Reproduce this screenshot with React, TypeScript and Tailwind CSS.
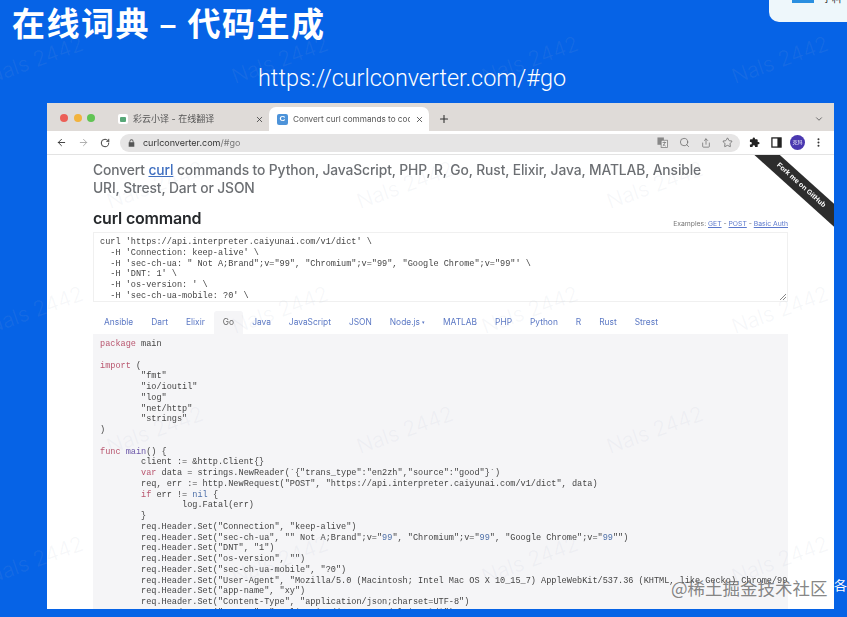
import { ArrowLeft, ArrowRight, ChevronDown, EllipsisVertical, Plus, RotateCw, Search, Share, Star, X } from "lucide-react";
import type { ReactNode } from "react";

const tabs = ["Ansible", "Dart", "Elixir", "Go", "Java", "JavaScript", "JSON", "Node.js", "MATLAB", "PHP", "Python", "R", "Rust", "Strest"];

// watermark rows, centre points on the slide
const marks = [
  [35, 60], [280, 60], [530, 60], [780, 60],
  [155, 185], [405, 185], [655, 185],
  [35, 310], [280, 310], [530, 310], [780, 310],
  [155, 430], [405, 430], [655, 430],
  [35, 560], [280, 560], [530, 560], [780, 560],
];

const curlLines = [
  "curl 'https://api.interpreter.caiyunai.com/v1/dict' \\",
  "  -H 'Connection: keep-alive' \\",
  "  -H 'sec-ch-ua: \" Not A;Brand\";v=\"99\", \"Chromium\";v=\"99\", \"Google Chrome\";v=\"99\"' \\",
  "  -H 'DNT: 1' \\",
  "  -H 'os-version: ' \\",
  "  -H 'sec-ch-ua-mobile: ?0' \\",
  "  -H 'User-Agent: Mozilla/5.0 (Macintosh; Intel Mac OS X 10_15_7) AppleWebKit/537.36 (KHTML, like Gecko) Chrome/99.0' \\",
];

function K({ children }: { children: ReactNode }) {
  return <span className="text-[#b9566f]">{children}</span>;
}

function N({ children }: { children: ReactNode }) {
  return <span className="text-[#4d6fa8]">{children}</span>;
}

function GoCode() {
  return (
    <pre className="font-['Liberation_Mono',monospace] text-[8.55px] leading-[10.75px] text-[#444] [tab-size:8]">
      <K>package</K> main{"\n\n"}
      <K>import</K> ({"\n"}
      {"\t"}"fmt"{"\n"}
      {"\t"}"io/ioutil"{"\n"}
      {"\t"}"log"{"\n"}
      {"\t"}"net/http"{"\n"}
      {"\t"}"strings"{"\n"}
      ){"\n\n"}
      <K>func</K> <span className="text-[#6a55a8]">main</span>() {"{"}{"\n"}
      {"\t"}client := &http.Client{"{}"}{"\n"}
      {"\t"}<K>var</K> data = strings.NewReader(`{'{"trans_type":"en2zh","source":"good"}'}`){"\n"}
      {"\t"}req, err := http.NewRequest("POST", "https://api.interpreter.caiyunai.com/v1/dict", data){"\n"}
      {"\t"}<K>if</K> err != <N>nil</N> {"{"}{"\n"}
      {"\t\t"}log.Fatal(err){"\n"}
      {"\t"}{"}"}{"\n"}
      {"\t"}req.Header.Set("Connection", "keep-alive"){"\n"}
      {"\t"}req.Header.Set("sec-ch-ua", "" Not A;Brand";v="<N>99</N>", "Chromium";v="<N>99</N>", "Google Chrome";v="<N>99</N>""){"\n"}
      {"\t"}req.Header.Set("DNT", "1"){"\n"}
      {"\t"}req.Header.Set("os-version", ""){"\n"}
      {"\t"}req.Header.Set("sec-ch-ua-mobile", "?0"){"\n"}
      {"\t"}req.Header.Set("User-Agent", "Mozilla/5.0 (Macintosh; Intel Mac OS X 10_15_7) AppleWebKit/537.36 (KHTML, like Gecko) Chrome/99.0"){"\n"}
      {"\t"}req.Header.Set("app-name", "xy"){"\n"}
      {"\t"}req.Header.Set("Content-Type", "application/json;charset=UTF-8"){"\n"}
      {"\t"}req.Header.Set("Accept", "application/json, text/plain, */*"){"\n"}
    </pre>
  );
}

function TabBar() {
  return (
    <div className="flex h-[28px] items-end bg-[#dfdbd8] pl-[13px]">
      <div className="flex h-[28px] w-[56px] shrink-0 items-center gap-[5.5px] pt-[1px]">
        <span className="size-[8px] rounded-full bg-[#ec5f57]" />
        <span className="size-[8px] rounded-full bg-[#f2b33d]" />
        <span className="size-[8px] rounded-full bg-[#61c454]" />
      </div>
      <div className="flex h-[24px] w-[153px] shrink-0 items-center pl-[2px] pr-[5px] text-[#555]">
        <span className="flex size-[10px] items-center justify-center rounded-[2px] bg-white">
          <span className="h-[5px] w-[6px] rounded-[1px] bg-[#58a878]" />
        </span>
        <span className="ml-[5px] flex-1 text-[9px]">彩云小译 - 在线翻译</span>
        <X size={9} strokeWidth={2} className="text-[#333]" />
      </div>
      <div className="flex h-[24px] w-[160px] shrink-0 items-center rounded-t-[7px] bg-white pl-[8px] pr-[5px] text-[#555]">
        <span className="flex size-[11px] items-center justify-center rounded-[2px] bg-[#4d93d9] font-['Liberation_Sans',sans-serif] text-[8px] font-bold text-white">C</span>
        <span className="ml-[5px] w-[117px] overflow-hidden whitespace-nowrap text-[8.2px]">Convert curl commands to code</span>
        <X size={9} strokeWidth={2} className="ml-[5px] text-[#333]" />
      </div>
      <div className="ml-[2px] flex h-[24px] w-[26px] items-center justify-center">
        <Plus size={12} strokeWidth={2.2} className="text-[#333]" />
      </div>
      <div className="ml-auto flex h-[24px] w-[30px] items-center justify-center">
        <ChevronDown size={10} strokeWidth={2} className="text-[#555]" />
      </div>
    </div>
  );
}

function Toolbar() {
  return (
    <div className="flex h-[24px] items-center border-b border-[#e3e3e3] bg-white pl-[9px] pr-[10px]">
      <ArrowLeft size={11} strokeWidth={2} className="text-[#333]" />
      <ArrowRight size={11} strokeWidth={2} className="ml-[11px] text-[#aaa]" />
      <RotateCw size={10} strokeWidth={2.2} className="ml-[11px] text-[#333]" />
      <div className="ml-[10px] flex h-[18px] w-[621px] items-center rounded-full bg-[#e6e5e5] pl-[8px] pr-[7px]">
        <svg viewBox="0 0 10 12" className="h-[8px] w-[7px] fill-[#555]">
          <path d="M2 5V3.5a3 3 0 0 1 6 0V5h1.2v6.5H.8V5zm1.2 0h3.6V3.5a1.8 1.8 0 0 0-3.6 0z" />
        </svg>
        <span className="ml-[8px] text-[9px] text-[#333]">
          curlconverter.com<span className="text-[#777]">/#go</span>
        </span>
        <div className="ml-auto flex items-center gap-[11px] text-[#666]">
          <svg viewBox="0 0 12 12" className="size-[11px]">
            <rect x="0.5" y="0.5" width="7" height="8" fill="#888" />
            <rect x="4.5" y="3.5" width="7" height="8" fill="#eee" stroke="#777" strokeWidth="0.8" />
            <path d="M6 6h4M8 5v1M6.5 10l2.5-4M7 8l2.5 2" stroke="#666" strokeWidth="0.7" fill="none" />
          </svg>
          <Search size={11} strokeWidth={1.6} />
          <Share size={10} strokeWidth={1.7} />
          <Star size={11} strokeWidth={1.7} />
        </div>
      </div>
      <svg viewBox="0 0 24 24" className="ml-[9px] size-[11px] fill-[#222]">
        <path d="M20.5 11H19V7a2 2 0 0 0-2-2h-4V3.5a2.5 2.5 0 0 0-5 0V5H4a2 2 0 0 0-2 2v3.8h1.5a2.7 2.7 0 0 1 0 5.4H2V20a2 2 0 0 0 2 2h3.8v-1.5a2.7 2.7 0 0 1 5.4 0V22H17a2 2 0 0 0 2-2v-4h1.5a2.5 2.5 0 0 0 0-5z" />
      </svg>
      <svg viewBox="0 0 12 12" className="ml-[11px] size-[11px]">
        <rect x="1" y="1" width="10" height="10" fill="none" stroke="#222" strokeWidth="1.4" />
        <rect x="7" y="1" width="4" height="10" fill="#222" />
      </svg>
      <span className="ml-[8px] flex size-[15px] items-center justify-center rounded-full bg-[#4a38b0] text-[5px] text-white">克玛</span>
      <EllipsisVertical size={11} strokeWidth={2.4} className="ml-[8px] text-[#333]" />
    </div>
  );
}

function PageContent() {
  return (
    <div className="relative min-h-0 flex-1 overflow-hidden bg-white pl-[46px] pr-[46px] font-['Inter',sans-serif]">
      <h1 className="pt-[6px] text-[13.8px] font-medium leading-[18px] tracking-[-0.1px] text-[#6c6f73]">
        Convert <a className="text-[#3f6fc0] underline">curl</a> commands to Python, JavaScript, PHP, R, Go, Rust, Elixir, Java, MATLAB, Ansible
        <br />
        URI, Strest, Dart or JSON
      </h1>
      <div className="mt-[9px] flex h-[24px] items-end justify-between">
        <h2 className="text-[16px] font-semibold leading-[24px] tracking-[-0.2px] text-[#26292c]">curl command</h2>
        <p className="pb-[1px] text-[6.8px] leading-[10px] text-[#777]">
          Examples: <a className="text-[#5b78cc] underline">GET</a> - <a className="text-[#5b78cc] underline">POST</a> - <a className="text-[#5b78cc] underline">Basic Auth</a>
        </p>
      </div>
      <div className="relative mt-[2px] h-[70px] overflow-hidden border border-[#f0f0f0] pl-[6px] pt-[4px]">
        <pre className="font-['Liberation_Mono',monospace] text-[8.55px] leading-[10.75px] text-[#444]">{curlLines.join("\n")}</pre>
        <svg viewBox="0 0 8 8" className="absolute bottom-0 right-0 size-[8px] stroke-[#888]">
          <path d="M1 7 7 1M4 7l3-3" />
        </svg>
      </div>
      <div className="mt-[9px] flex h-[23px] items-stretch pl-[2px]">
        {tabs.map((t) => (
          <span
            key={t}
            className={
              t === "Go"
                ? "flex items-center rounded-t-[3px] bg-[#f5f5f7] px-[9px] text-[8.4px] text-[#666]"
                : "flex items-center px-[9px] text-[8.4px] text-[#5b78c4]"
            }
          >
            {t}
            {t === "Node.js" && <span className="ml-[2px] text-[5px]">▾</span>}
          </span>
        ))}
      </div>
      <div className="h-[300px] overflow-hidden bg-[#f5f5f7] pl-[7px] pt-[5px]">
        <GoCode />
      </div>
      {/* ribbon over the page corner */}
      <div className="absolute right-[-32px] top-[22px] flex h-[17px] w-[130px] rotate-[42deg] items-center justify-center bg-[#2d2d2d] font-['Liberation_Sans',sans-serif] text-[7px] font-bold text-white">
        Fork me on GitHub
      </div>
    </div>
  );
}

export default function App() {
  return (
    <div className="relative flex h-[617px] w-[847px] flex-col overflow-hidden bg-[#0663e6]">
      <div className="relative h-[103px] shrink-0 text-white">
        <h1 className="pl-[12px] font-['Noto_Sans_CJK_SC',sans-serif] text-[33px] font-bold leading-[44px] tracking-[1.5px]">在线词典 – 代码生成</h1>
        <p className="pl-[258px] pt-[19px] font-['Roboto',sans-serif] text-[23.4px] font-light leading-[30px]">https://curlconverter.com/#go</p>
      </div>
      <div className="ml-[47px] flex h-[506px] w-[787px] shrink-0 flex-col overflow-hidden font-['Inter','Noto_Sans_CJK_SC',sans-serif] blur-[0.4px]">
        <TabBar />
        <Toolbar />
        <PageContent />
      </div>
      {/* card peeking in at the top right */}
      <div className="absolute right-[-20px] top-[-10px] flex h-[32px] w-[98px] items-start rounded-[10px] bg-[#eef7fb] pl-[23px] pt-[3px] text-[10px] leading-[11px] text-[#222]">
        <span className="mr-[8px] mt-[7px] h-[3px] w-[22px] bg-[#2a8fe0]" />
        了料
      </div>
      {/* slide watermarks */}
      {marks.map(([x, y]) => (
        <span
          key={`${x}-${y}`}
          style={{ left: x, top: y }}
          className="pointer-events-none absolute -translate-x-1/2 -translate-y-1/2 -rotate-[20deg] whitespace-nowrap font-['Inter',sans-serif] text-[21px] font-light text-[#a9b4c8]/10"
        >
          Nals 2442
        </span>
      ))}
      <span className="absolute left-[671px] top-[576px] font-['Noto_Sans_CJK_SC',sans-serif] text-[17.5px] leading-[24px] text-[#666]/80">@稀土掘金技术社区</span>
      <span className="absolute left-[834px] top-[577px] whitespace-nowrap font-['Noto_Sans_CJK_SC',sans-serif] text-[13px] leading-[16px] text-white">各接</span>
    </div>
  );
}
